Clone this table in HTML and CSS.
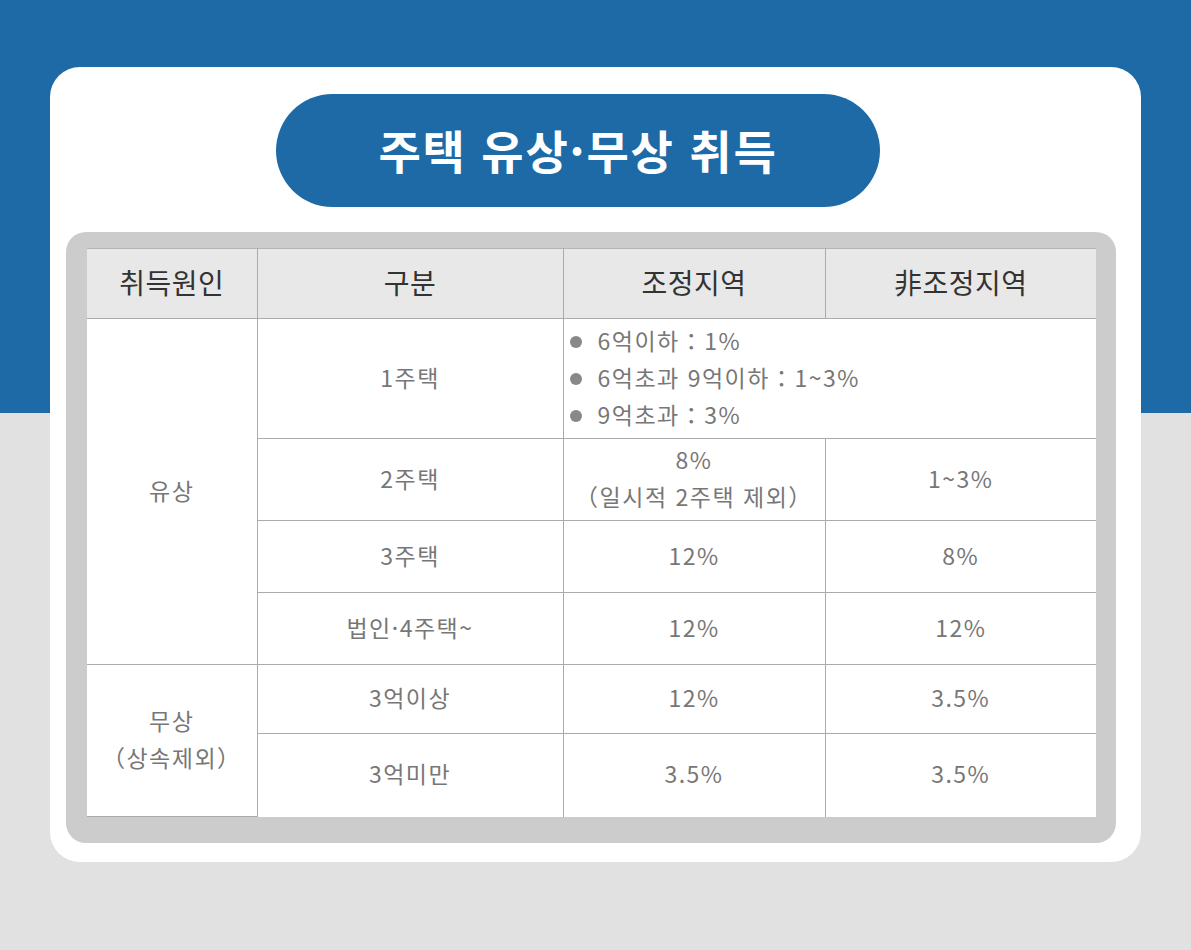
FILE: index.html
```html
<!DOCTYPE html>
<html lang="ko">
<head>
<meta charset="utf-8">
<title>주택 유상·무상 취득</title>
<link rel="stylesheet" href="styles.css">
</head>
<body>
<div class="card">
  <h1 class="title">주택 유상·무상 취득</h1>
  <div class="frame">
    <table class="tax">
      <colgroup>
        <col class="c1"><col class="c2"><col class="c3"><col class="c4">
      </colgroup>
      <thead>
        <tr class="r-head">
          <th>취득원인</th><th>구분</th><th>조정지역</th><th>非조정지역</th>
        </tr>
      </thead>
      <tbody>
        <tr class="r1">
          <td rowspan="4" class="cause">유상</td>
          <td>1주택</td>
          <td colspan="2" class="bullets">
            <ul>
              <li>6억이하：1%</li>
              <li>6억초과 9억이하：1~3%</li>
              <li>9억초과：3%</li>
            </ul>
          </td>
        </tr>
        <tr class="r2">
          <td>2주택</td>
          <td>8%<br>（일시적 2주택 제외）</td>
          <td>1~3%</td>
        </tr>
        <tr class="r3">
          <td>3주택</td><td>12%</td><td>8%</td>
        </tr>
        <tr class="r4">
          <td>법인·4주택~</td><td>12%</td><td>12%</td>
        </tr>
        <tr class="r5">
          <td rowspan="2" class="cause">무상<br>（상속제외）</td>
          <td>3억이상</td><td>12%</td><td>3.5%</td>
        </tr>
        <tr class="r6">
          <td>3억미만</td><td>3.5%</td><td>3.5%</td>
        </tr>
      </tbody>
    </table>
  </div>
</div>
</body>
</html>
```
FILE: styles.css
```css
html, body {
  margin: 0;
  padding: 0;
}
body {
  width: 1191px;
  height: 950px;
  background: linear-gradient(to bottom, #1d6aa6 0, #1d6aa6 413px, #e1e1e1 413px, #e1e1e1 100%);
  font-family: "Noto Sans CJK KR", "Noto Sans", sans-serif;
  padding-top: 67px;
  box-sizing: border-box;
  overflow: hidden;
}
.card {
  margin-left: 50px;
  width: 1091px;
  height: 795px;
  background: #ffffff;
  border-radius: 30px;
  box-sizing: border-box;
  padding-top: 27px;
  display: flex;
  flex-direction: column;
  align-items: flex-start;
}
.title {
  margin: 0 0 0 226px;
  width: 604px;
  height: 113px;
  border-radius: 57px;
  background: #1d6aa6;
  color: #ffffff;
  font-size: 46px;
  font-weight: 700;
  display: flex;
  align-items: center;
  justify-content: center;
  letter-spacing: 1.8px;
  box-sizing: border-box;
  padding-bottom: 3px;
}
.frame {
  margin: 25px 0 0 16px;
  width: 1050px;
  height: 611px;
  background: #cccccc;
  border-radius: 20px;
  box-sizing: border-box;
  padding: 16px 20px 27px 21px;
}
.tax {
  border-collapse: collapse;
  width: 1009px;
  table-layout: fixed;
  background: #ffffff;
}
.c1 { width: 170px; }
.c2 { width: 306px; }
.c3 { width: 262px; }
.c4 { width: 271px; }
.tax th, .tax td {
  border: 1px solid #ababab;
  padding: 0 0 3px 0;
  text-align: center;
  vertical-align: middle;
}
.tax tr > :first-child { border-left: none; }
.tax tr > :last-child { border-right: none; }
.tax tbody tr:last-child td { border-bottom: none; }
.tax td.cause { border-left: none; }
.tax th {
  background: #e8e8e8;
  color: #333333;
  font-size: 28px;
  font-weight: 400;
  height: 66px;
  border-top: 1px solid #b5b5b5;
  letter-spacing: 0.5px;
}
.tax td {
  color: #777777;
  font-size: 23px;
  line-height: 37px;
  letter-spacing: 1.5px;
}
.r1 td { height: 116px; }
.r2 td { height: 78px; }
.r3 td { height: 68px; }
.r4 td { height: 68px; }
.r5 td { height: 65px; }
.r6 td { height: 79px; }
.r5 td.cause { height: 148px; }
.tax td.bullets {
  text-align: left;
  padding-left: 6px;
}
.bullets ul {
  list-style: none;
  margin: 0;
  padding: 0;
}
.bullets li {
  display: flex;
  align-items: center;
  gap: 16px;
}
.bullets li::before {
  content: "";
  width: 12px;
  height: 12px;
  border-radius: 50%;
  background: #888888;
  flex: none;
  margin-top: 3px;
}
```
